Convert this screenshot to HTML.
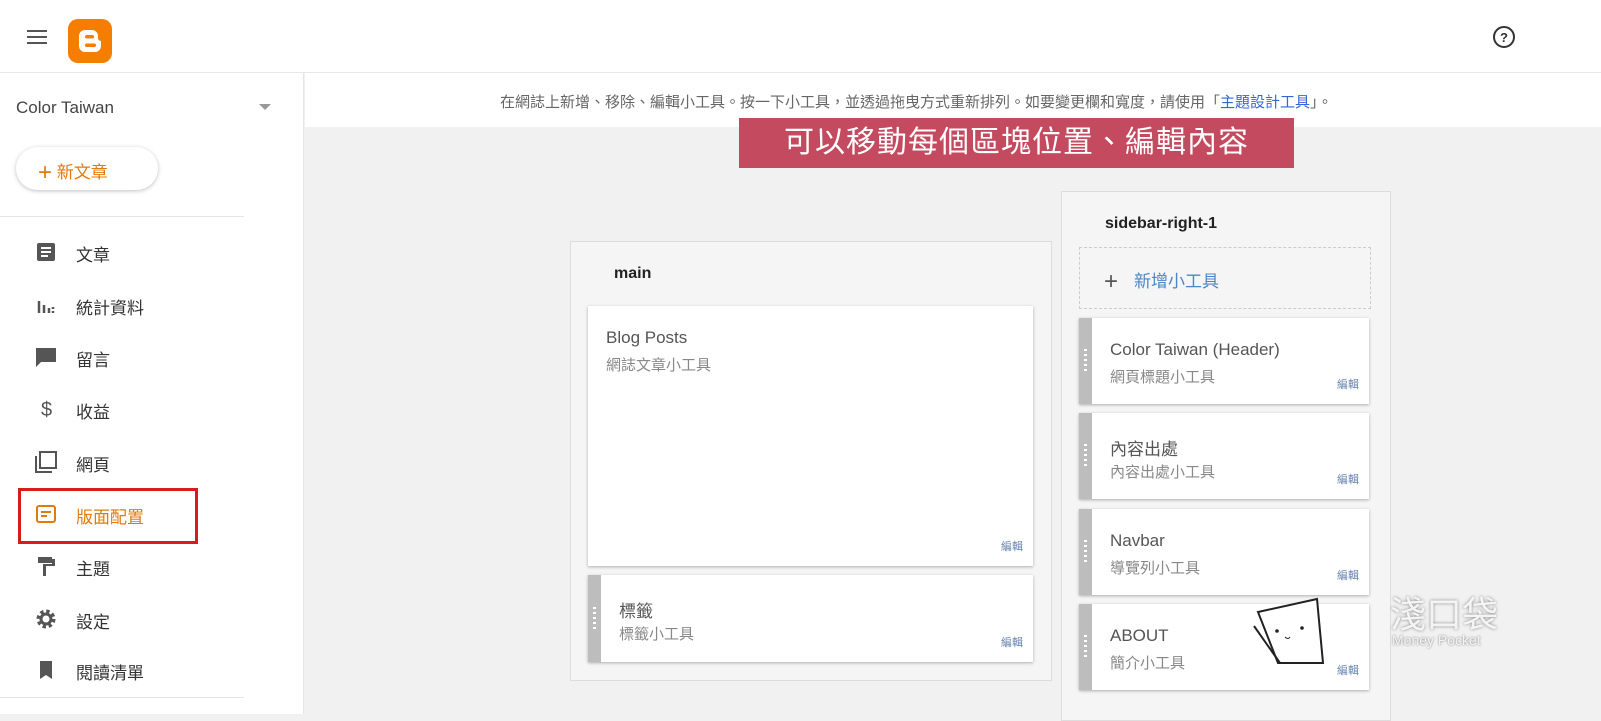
<!DOCTYPE html>
<html><head><meta charset="utf-8"><style>
*{margin:0;padding:0;box-sizing:border-box}
body{width:1601px;height:714px;overflow:hidden;background:#f1f1f1;font-family:"Liberation Sans","Noto Sans CJK TC",sans-serif;position:relative;color:#333}
.a{position:absolute}
.hdr{left:0;top:0;width:1601px;height:73px;background:#fff;border-bottom:1px solid #e8e8e8}
.side{left:0;top:73px;width:304px;height:641px;background:#fff;border-right:1px solid #e6e6e6}
.info{left:305px;top:73px;width:1296px;height:54px;background:#fff}
.nav{left:0;width:300px;height:40px;font-size:17px;color:#333}
.nav span{position:absolute;left:76px;top:9px}
.nav svg{position:absolute;left:34px;top:8px}
.card{background:#fff;box-shadow:0 1px 3px rgba(0,0,0,.3)}
.card .h{position:absolute;left:0;top:0;bottom:0;width:13px;background:#bdbdbd}
.card .h:after{content:"";position:absolute;left:5px;top:50%;margin-top:-12px;width:3px;height:24px;background:repeating-linear-gradient(#fff 0 2px,transparent 2px 5px)}
.t{position:absolute;left:31px;top:22px;font-size:17px;color:#555}
.s{position:absolute;left:31px;top:48px;font-size:15px;color:#888}
.e{position:absolute;right:10px;bottom:12px;font-size:11px;color:#6a86b0}
</style></head><body>
<div class="a hdr"></div>
<svg class="a" style="left:27px;top:29px" width="20" height="16"><path d="M0 2h20M0 8h20M0 14h20" stroke="#555" stroke-width="2"/></svg>
<svg class="a" style="left:68px;top:19px" width="44" height="44"><rect width="44" height="44" rx="10" fill="#f57d00"/><path d="M11 17a6 6 0 0 1 6-6h7a6 6 0 0 1 6 6v2a3 3 0 0 0 3 3a0 0 0 0 1 0 0v5a6 6 0 0 1-6 6h-10a6 6 0 0 1-6-6z" fill="#fff"/><rect x="17" y="16" width="9" height="3.5" rx="1.75" fill="#f57d00"/><rect x="17" y="24.5" width="11" height="3.5" rx="1.75" fill="#f57d00"/></svg>
<svg class="a" style="left:1492px;top:25px" width="24" height="24"><circle cx="12" cy="12" r="10" fill="none" stroke="#333" stroke-width="2"/><text x="12" y="17" font-size="13" font-weight="bold" text-anchor="middle" fill="#333" font-family="Liberation Sans">?</text></svg>
<div class="a side"></div>
<div class="a" style="left:16px;top:98px;font-size:17px;color:#444">Color Taiwan</div>
<div class="a" style="left:259px;top:104px;width:0;height:0;border:6px solid transparent;border-top-color:#999"></div>
<div class="a" style="left:16px;top:147px;width:142px;height:43px;border-radius:22px;background:#fff;box-shadow:0 1px 4px rgba(0,0,0,.25);color:#e07b0c;font-size:17px;padding:10px 0 0 22px"><span style="font-size:24px;position:relative;top:2px">+</span> 新文章</div>
<div class="a" style="left:0;top:216px;width:244px;height:1px;background:#e6e6e6"></div>
<div class="a nav" style="top:232px"><svg width="24" height="24"><rect x="3" y="3" width="18" height="18" rx="2" fill="#555"/><path d="M7 8h10M7 12h10M7 16h7" stroke="#fff" stroke-width="2"/></svg><span>文章</span></div>
<div class="a nav" style="top:285px"><svg width="24" height="24"><path d="M5 8v12M10 12v8M15 15v5M19 14v2M19 18v2" stroke="#555" stroke-width="2.5"/></svg><span>統計資料</span></div>
<div class="a nav" style="top:337px"><svg width="24" height="24"><path d="M2 3h20v14H7l-5 5z" fill="#555"/></svg><span>留言</span></div>
<div class="a nav" style="top:389px"><svg width="24" height="24"><text x="7" y="19" font-size="20" fill="#555" font-family="Liberation Sans">$</text></svg><span>收益</span></div>
<div class="a nav" style="top:442px"><svg width="24" height="24"><path d="M6 2h16v16H6z" fill="none" stroke="#555" stroke-width="2"/><path d="M2 6v16h16" fill="none" stroke="#555" stroke-width="2"/></svg><span>網頁</span></div>
<div class="a nav" style="top:494px;color:#e07b0c"><svg width="24" height="24"><rect x="3" y="4" width="18" height="16" rx="2" fill="none" stroke="#e07b0c" stroke-width="2"/><path d="M7 10h10M7 14h6" stroke="#e07b0c" stroke-width="2"/></svg><span>版面配置</span></div>
<div class="a" style="left:18px;top:488px;width:180px;height:56px;border:3px solid #d81b1b"></div>
<div class="a nav" style="top:546px"><svg width="24" height="24"><path d="M4 3h14v6H4zM18 5h3v7h-9v10h-3v-12h9" fill="#555"/></svg><span>主題</span></div>
<div class="a nav" style="top:599px"><svg width="24" height="24"><circle cx="12" cy="12" r="7" fill="none" stroke="#555" stroke-width="5" stroke-dasharray="3 2.5"/><circle cx="12" cy="12" r="5" fill="none" stroke="#555" stroke-width="3"/></svg><span>設定</span></div>
<div class="a nav" style="top:650px"><svg width="24" height="24"><path d="M6 3h12v18l-6-4-6 4z" fill="#555"/></svg><span>閱讀清單</span></div>
<div class="a" style="left:0;top:697px;width:244px;height:1px;background:#e6e6e6"></div>
<div class="a info"></div>
<div class="a" style="left:500px;top:91px;font-size:15px;color:#666">在網誌上新增、移除、編輯小工具。按一下小工具，並透過拖曳方式重新排列。如要變更欄和寬度，請使用「<span style="color:#3367d6">主題設計工具</span>」。</div>
<div class="a" style="left:739px;top:118px;width:555px;height:50px;background:#c44a60;color:#fff;font-size:30px;text-align:center;line-height:50px;letter-spacing:1px">可以移動每個區塊位置、編輯內容</div>
<div class="a" style="left:570px;top:241px;width:482px;height:440px;background:#f5f5f5;border:1px solid #ddd"></div>
<div class="a" style="left:614px;top:265px;font-size:16px;font-weight:bold;color:#222">main</div>
<div class="a card" style="left:588px;top:306px;width:445px;height:260px"><div class="t" style="left:18px">Blog Posts</div><div class="s" style="left:18px">網誌文章小工具</div><div class="e">編輯</div></div>
<div class="a card" style="left:588px;top:575px;width:445px;height:87px"><div class="h"></div><div class="t">標籤</div><div class="s">標籤小工具</div><div class="e">編輯</div></div>
<div class="a" style="left:1061px;top:191px;width:330px;height:530px;background:#f5f5f5;border:1px solid #ddd"></div>
<div class="a" style="left:1105px;top:215px;font-size:16px;font-weight:bold;color:#222">sidebar-right-1</div>
<div class="a" style="left:1079px;top:247px;width:292px;height:62px;border:1px dashed #ccc;color:#4a86c5;font-size:17px;padding:18px 0 0 24px"><span style="color:#555;font-size:24px;position:relative;top:2px;margin-right:16px">+</span>新增小工具</div>
<div class="a card" style="left:1079px;top:318px;width:290px;height:86px"><div class="h"></div><div class="t">Color Taiwan (Header)</div><div class="s">網頁標題小工具</div><div class="e">編輯</div></div>
<div class="a card" style="left:1079px;top:413px;width:290px;height:86px"><div class="h"></div><div class="t">內容出處</div><div class="s">內容出處小工具</div><div class="e">編輯</div></div>
<div class="a card" style="left:1079px;top:509px;width:290px;height:86px"><div class="h"></div><div class="t">Navbar</div><div class="s">導覽列小工具</div><div class="e">編輯</div></div>
<div class="a card" style="left:1079px;top:604px;width:290px;height:86px"><div class="h"></div><div class="t">ABOUT</div><div class="s">簡介小工具</div><div class="e">編輯</div></div>
<svg class="a" style="left:1250px;top:595px" width="80" height="70"><path d="M8 17 L67 4 L73 68 L28 68 Z" fill="#fff" stroke="#222" stroke-width="2"/><path d="M4 31 L30 68" stroke="#222" stroke-width="2"/><circle cx="52" cy="33" r="1.8" fill="#222"/><circle cx="27" cy="36" r="1.8" fill="#222"/><path d="M35 42q3 3 5 0" stroke="#222" fill="none"/></svg>
<div class="a" style="left:1390px;top:586px;font-size:36px;color:#f4f4f4;text-shadow:0 0 3px rgba(0,0,0,.45)">淺口袋</div>
<div class="a" style="left:1392px;top:632px;font-size:14px;color:#f4f4f4;text-shadow:0 0 2px rgba(0,0,0,.5)">Money Pocket</div>
</body></html>
